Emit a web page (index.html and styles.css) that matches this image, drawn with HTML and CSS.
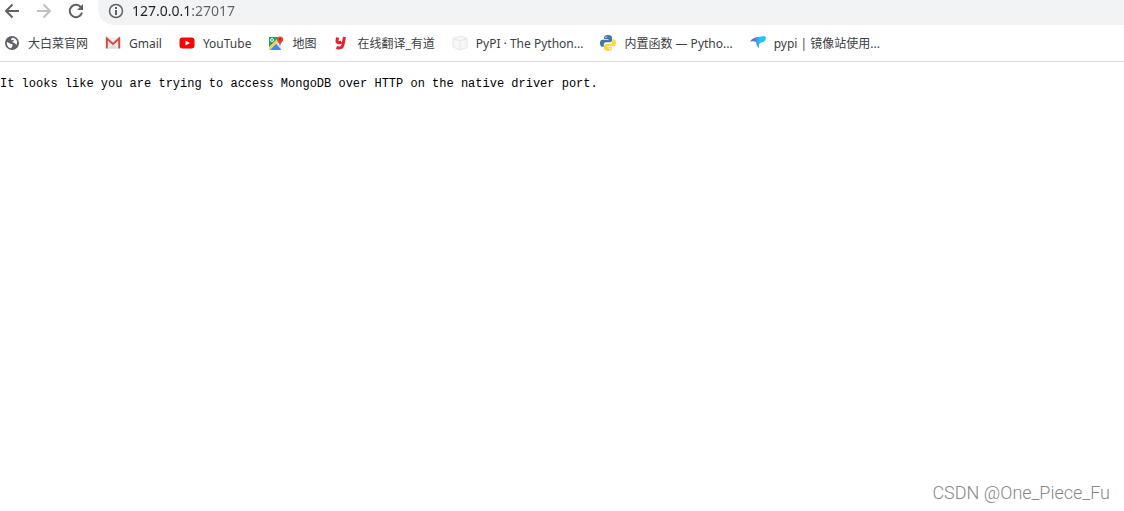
FILE: index.html
```
<!DOCTYPE html>
<html lang="zh-CN">
<head>
    <meta charset="UTF-8">
    <meta name="viewport" content="width=device-width, initial-scale=1.0">
    <title>127.0.0.1:27017</title>
    <link rel="stylesheet" href="styles.css">
</head>
<body>
    <header>
        <div class="toolbar">
            <button class="nav-button" type="button" aria-label="Back">
                <svg viewBox="0 0 16 16"><path d="M15 8H2M8.500 1.500L2 8l6.500 6.500"/></svg>
            </button>
            <button class="nav-button" type="button" aria-label="Forward" disabled>
                <svg viewBox="0 0 16 16"><path d="M1 8h13M7.500 1.500L14 8l-6.500 6.500"/></svg>
            </button>
            <button class="nav-button" type="button" aria-label="Reload">
                <svg viewBox="0 0 16 16"><path d="M13.200 4.600A6.200 6.200 0 1 0 14 9.500"/><path class="solid" d="M15 1v6H9z"/></svg>
            </button>
            <label class="omnibox">
                <svg viewBox="0 0 16 16" role="img" aria-label="Address">
                    <circle cx="8" cy="8" r="6.500" stroke-width="1.500"/>
                    <path d="M8 7v5M8 4v2" stroke-width="2"/>
                </svg>
                <input class="address" type="text" value="127.0.0.1:27017">
            </label>
        </div>
        <nav class="bookmarks">
            <a href="#">
                <svg viewBox="0 0 16 16">
                    <circle cx="8" cy="8" r="7" fill="#5f6368"/>
                    <path d="M3 7l3 1.500c1 .5 2 .2 2.500 1v1.800L7 13.200C4 12.600 2.500 10 3 7z" fill="#fff"/>
                    <path d="M8 2.800c2.300 0 4.300 1.300 5 3.500.3 1.500 0 2.600-.7 3.700-.8-.4-.6-1.500-1.400-1.700C9.500 8 8.500 8 8.400 7c0-1 1.600-.8 1.500-1.800C9.500 4.600 7.500 5.700 7 5c-.3-.8.700-1.200 1-2.200z" fill="#fff"/>
                </svg>
                <span>大白菜官网</span>
            </a>
            <a href="#">
                <svg viewBox="0 0 16 16">
                    <path d="M1 2.500h14v11H1z" fill="#eee"/>
                    <path d="M3 13.500L8 9l5 4.500z" fill="#dcdcdc"/>
                    <path d="M1.800 13.500V3.500L8 9l6.200-5.500v10" fill="none" stroke="#d54b3d" stroke-width="2"/>
                </svg>
                <span>Gmail</span>
            </a>
            <a href="#">
                <svg viewBox="0 0 16 16">
                    <rect x="0.500" y="2.500" width="15" height="11" rx="3" fill="#f00"/>
                    <path d="M6.500 5.500v5L11 8z" fill="#fff"/>
                </svg>
                <span>YouTube</span>
            </a>
            <a href="#">
                <svg viewBox="0 0 16 16">
                    <path d="M1 2h12v13H1z" fill="#ddd"/>
                    <path d="M1 2h10L8 8l-7 6z" fill="#1fa463"/>
                    <path d="M1 14.500L7.500 8l6 6.500z" fill="#4688f1"/>
                    <path d="M1 12L9 4l2 2L2 15H1z" fill="#ffd04b"/>
                    <path d="M2.500 15L8 9.500l5 5.500z" fill="#4688f1"/>
                    <path d="M8.500 9l2-2 2.500 4v3z" fill="#e4e4e4"/>
                    <circle cx="4" cy="5" r="1.500" fill="none" stroke="#fff"/>
                    <path d="M12 11c-.3-3-3-3.700-3-6.500a3 3 0 0 1 6.200 0C15.200 7.300 12.300 8 12 11z" fill="#dd4b3e"/>
                    <circle cx="12.100" cy="4.400" r="1.100" fill="#822f2b"/>
                </svg>
                <span>地图</span>
            </a>
            <a href="#">
                <svg viewBox="0 0 16 16">
                    <path d="M4.500 2.500L4 6c-.2 2 2.500 2.200 4.300.8M11.500 2l-1.500 7.500c-.6 3.500-3 4-6.500 3" fill="none" stroke="#e8202d" stroke-width="3"/>
                </svg>
                <span>在线翻译_有道</span>
            </a>
            <a href="#">
                <svg viewBox="0 0 16 16">
                    <path d="M1 3.500L9 1l6 2.500v9L8 15l-7-3z" fill="#f7f7f5" stroke="#e6e6e3"/>
                    <path d="M1 3.500L8 6l7-2.500M8 6v9" fill="none" stroke="#e6e6e3"/>
                </svg>
                <span>PyPI · The Python...</span>
            </a>
            <a href="#">
                <svg viewBox="0 0 16 16">
                    <path d="M8 0C5 0 4 1 4 2.500V4h4.500v.7H2.300C.7 4.700 0 6 0 8.200c0 2.300.8 3.500 2.200 3.500h1.600V9.500c0-1.500 1-2.300 2.400-2.300h3.600c1.300 0 2.200-.8 2.200-2V2.500C12 1 10.800 0 8 0z" fill="#3c78a9"/>
                    <path d="M8 16c3 0 4-1 4-2.500V12H7.500v-.7h6.200c1.600 0 2.300-1.300 2.300-3.500 0-2.300-.8-3.500-2.200-3.500h-1.600v2.200c0 1.500-1 2.300-2.400 2.300H6.200c-1.300 0-2.200.8-2.200 2v2.700C4 15 5.200 16 8 16z" fill="#ffd845"/>
                    <circle cx="6" cy="2.200" r=".7" fill="#fff"/>
                    <circle cx="10" cy="13.800" r=".7" fill="#fff"/>
                </svg>
                <span>内置函数 — Pytho...</span>
            </a>
            <a href="#">
                <svg viewBox="0 0 16 16">
                    <defs>
                        <linearGradient id="wing" x1="0" x2="1">
                            <stop offset="0" stop-color="#8d45b5"/>
                            <stop offset=".35" stop-color="#5f7fd9"/>
                            <stop offset=".6" stop-color="#20c7f5"/>
                        </linearGradient>
                    </defs>
                    <path d="M0 6.500C2 3.500 5 2 8 2l6.500-1 1.500 1.500c-.3 3-1.500 4.500-4.500 5-2 .6-3 2-2.500 5.500C7.500 12 6 10 6.300 7.200 4.500 6 3 6 0 6.500z" fill="url(#wing)"/>
                </svg>
                <span>pypi | 镜像站使用...</span>
            </a>
        </nav>
    </header>
    <main>
        <pre>It looks like you are trying to access MongoDB over HTTP on the native driver port.</pre>
    </main>
    <footer>CSDN @One_Piece_Fu</footer>
</body>
</html>
```

FILE: styles.css
```
body {
    margin: 0;
    min-height: 100vh;
    display: flex;
    flex-direction: column;
    background: #fff;
    font-family: "Noto Sans", "Noto Sans CJK SC", sans-serif;
}

svg {
    display: block;
    flex: none;
    width: 16px;
    height: 16px;
}

.toolbar {
    display: flex;
    align-items: flex-start;
    height: 25px;
    padding-left: 4px;
    gap: 16px;
}

.nav-button {
    margin: 0;
    padding: 3px 0;
    border: none;
    background: none;
}

.nav-button svg {
    fill: none;
    stroke: #5f6368;
    stroke-width: 2;
}

.nav-button:disabled svg {
    stroke: #bdc1c6;
}

.nav-button .solid {
    fill: #5f6368;
    stroke: none;
}

.omnibox {
    flex: 1;
    display: flex;
    align-items: center;
    gap: 8px;
    height: 25px;
    margin-left: -2px;
    padding-left: 10px;
    box-sizing: border-box;
    background: #f1f3f4;
    border-radius: 0 0 0 16px;
}

.omnibox svg {
    fill: none;
    stroke: #5f6368;
    margin-bottom: 3px;
}

/* host is dark, the port after it is grey */
.address {
    flex: 1;
    margin: 0 0 3px;
    padding: 0;
    border: none;
    outline: none;
    font: 14px/20px "Noto Sans", sans-serif;
    color: transparent;
    background: linear-gradient(to right, #202124 59px, #5f6368 59px);
    -webkit-background-clip: text;
    background-clip: text;
}

.bookmarks {
    display: flex;
    align-items: center;
    gap: 17px;
    height: 36px;
    padding-left: 4px;
    border-bottom: 1px solid #dadce0;
}

.bookmarks a {
    display: flex;
    align-items: center;
    gap: 8px;
    color: #3c4043;
    font-size: 12px;
    line-height: 16px;
    text-decoration: none;
    white-space: nowrap;
}

.bookmarks span {
    padding-top: 1px;
}

main {
    flex: 1;
}

pre {
    margin: 14px 0;
    font: 12px/16px "Liberation Mono", monospace;
    color: #000;
}

footer {
    padding: 0 14px 8px;
    font: 300 18px/20px Roboto, sans-serif;
    color: #888;
    text-align: right;
}
```
